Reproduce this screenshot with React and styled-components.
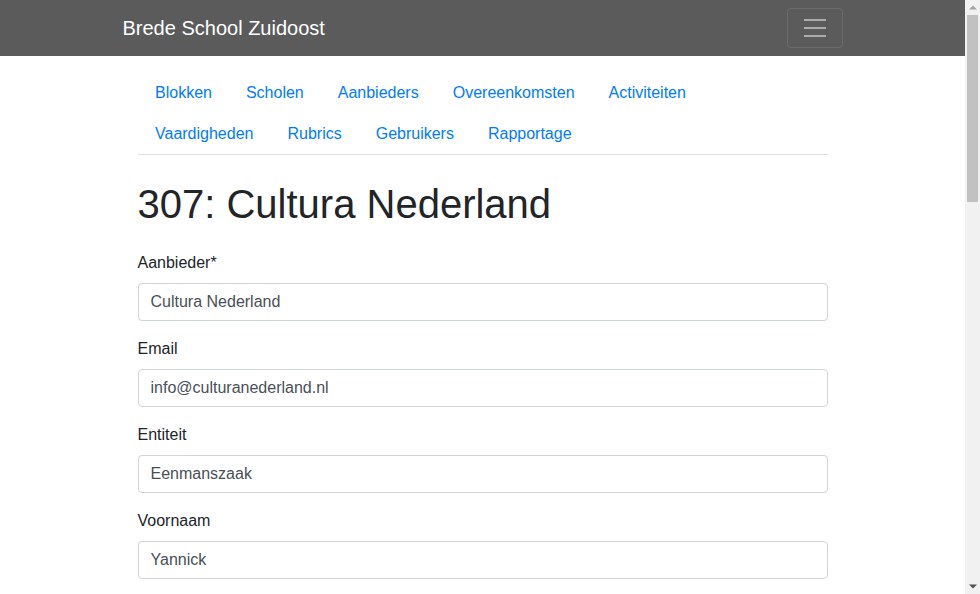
import React from "react";
import styled, { createGlobalStyle } from "styled-components";

const GlobalStyle = createGlobalStyle`
  *, *::before, *::after { box-sizing: border-box; }
  body {
    margin: 0;
    font-family: "Liberation Sans", Arial, sans-serif;
    font-size: 16px;
    line-height: 1.5;
    color: #212529;
    background: #fff;
  }
`;

const Window = styled.div`
  display: flex;
  height: 100vh;
  overflow: hidden;
`;

const Page = styled.div`
  flex: 1;
  min-width: 0;
  overflow: hidden;
`;

const ScrollBar = styled.div`
  width: 15px;
  flex: none;
  background: #f1f1f1;
  display: flex;
  flex-direction: column;
`;

const Arrow = styled.div`
  height: 15px;
  display: flex;
  align-items: center;
  justify-content: center;
`;

const Track = styled.div`
  flex: 1;
  padding: 0 2px;
`;

const Thumb = styled.div`
  height: 187px;
  background: #c1c1c1;
`;

const Navbar = styled.nav`
  background-color: #5b5b5b;
  padding: 8px 16px;
  height: 56px;
`;

const NavInner = styled.div`
  width: 720px;
  margin: 0 auto;
  display: flex;
  align-items: center;
  justify-content: space-between;
`;

const Brand = styled.a`
  color: #fff;
  font-size: 20px;
  line-height: 30px;
  padding: 5px 0;
  text-decoration: none;
`;

const Toggler = styled.button`
  width: 56px;
  height: 40px;
  padding: 4px 12px;
  background: transparent;
  border: 1px solid rgba(255, 255, 255, 0.1);
  border-radius: 4px;
  display: flex;
  align-items: center;
  justify-content: center;
`;

const Container = styled.main`
  width: 720px;
  margin: 0 auto;
  padding: 0 15px;
`;

const Tabs = styled.ul`
  list-style: none;
  margin: 16px 0 25px;
  padding: 0 0 0 0.5px;
  display: flex;
  flex-wrap: wrap;
  border-bottom: 1px solid #dee2e6;
`;

const TabLink = styled.a`
  display: block;
  padding: 8px 17px;
  line-height: 25px;
  color: #007bff;
  text-decoration: none;
`;

const Title = styled.h1`
  font-size: 40px;
  font-weight: 500;
  line-height: 48px;
  margin: 0 0 23px;
`;

const FormGroup = styled.div`
  margin-bottom: 16px;
`;

const Label = styled.label`
  display: block;
  margin-bottom: 8px;
`;

const Input = styled.input`
  display: block;
  width: 100%;
  height: 38px;
  padding: 6px 12px;
  font-family: inherit;
  font-size: 16px;
  line-height: 1.5;
  color: #495057;
  background: #fff;
  border: 1px solid #ced4da;
  border-radius: 4px;
`;

const tabs = [
  "Blokken",
  "Scholen",
  "Aanbieders",
  "Overeenkomsten",
  "Activiteiten",
  "Vaardigheden",
  "Rubrics",
  "Gebruikers",
  "Rapportage",
];

const fields = [
  ["Aanbieder*", "Cultura Nederland"],
  ["Email", "info@culturanederland.nl"],
  ["Entiteit", "Eenmanszaak"],
  ["Voornaam", "Yannick"],
];

export default function App() {
  return (
    <>
      <GlobalStyle />
      <Window>
        <Page>
          <Navbar>
            <NavInner>
              <Brand href="#">Brede School Zuidoost</Brand>
              <Toggler aria-label="menu">
                <svg width="30" height="30" viewBox="0 0 30 30">
                  <path
                    d="M4 7h22M4 15h22M4 23h22"
                    stroke="rgba(255,255,255,0.5)"
                    strokeWidth="2"
                  />
                </svg>
              </Toggler>
            </NavInner>
          </Navbar>
          <Container>
            <Tabs>
              {tabs.map(t => (
                <li key={t}>
                  <TabLink href="#">{t}</TabLink>
                </li>
              ))}
            </Tabs>
            <Title>307: Cultura Nederland</Title>
            <form>
              {fields.map(([label, value]) => (
                <FormGroup key={label}>
                  <Label>{label}</Label>
                  <Input defaultValue={value} />
                </FormGroup>
              ))}
            </form>
          </Container>
        </Page>
        <ScrollBar>
          <Arrow>
            <svg width="8" height="5" viewBox="0 0 8 5">
              <path d="M0 4.5L4 0.5L8 4.5Z" fill="#a3a3a3" />
            </svg>
          </Arrow>
          <Track>
            <Thumb />
          </Track>
          <Arrow>
            <svg width="8" height="5" viewBox="0 0 8 5">
              <path d="M0 0.5L4 4.5L8 0.5Z" fill="#505050" />
            </svg>
          </Arrow>
        </ScrollBar>
      </Window>
    </>
  );
}
